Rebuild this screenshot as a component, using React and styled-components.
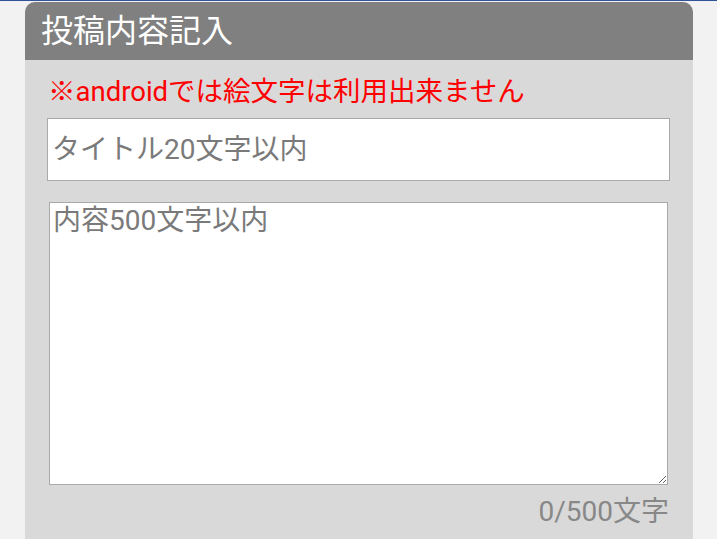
import React from "react";
import styled, { createGlobalStyle } from "styled-components";

const Global = createGlobalStyle`
  html, body { margin: 0; padding: 0; background: #f2f2f2; }
  body { font-family: "Roboto", "Noto Sans CJK JP", sans-serif; overflow: hidden; }
  * { box-sizing: border-box; }
`;

const Page = styled.div`
  height: 539px;
  display: flex;
  flex-direction: column;
  border-top: 1px solid #2f5597;
`;

const Card = styled.section`
  margin: 1px 0 0 25px;
  width: 668px;
  flex: 1;
  display: flex;
  flex-direction: column;
  background: #d9d9d9;
  border-radius: 10px 10px 0 0;
  overflow: hidden;
`;

const Header = styled.h2`
  margin: 0;
  height: 58px;
  padding-left: 16px;
  background: #808080;
  color: #ffffff;
  font-size: 32px;
  font-weight: 400;
  line-height: 58px;
`;

const Body = styled.div`
  display: flex;
  flex-direction: column;
  padding: 14px 0 0 22px;
`;

const Notice = styled.p`
  margin: 0 0 9px 0;
  padding-left: 1px;
  color: #ff0000;
  font-size: 27.5px;
  line-height: 35px;
`;

const placeholder = `
  &::placeholder { color: #7a7a7a; opacity: 1; }
`;

const TitleInput = styled.input`
  width: 623px;
  height: 63px;
  margin: 0;
  padding: 0 4px;
  border: 1px solid #a9a9a9;
  background: #ffffff;
  font-family: inherit;
  font-size: 28px;
  color: #333;
  outline: none;
  ${placeholder}
`;

const ContentArea = styled.textarea`
  display: block;
  width: 619px;
  height: 283px;
  margin: 21px 0 0 2px;
  padding: 2px 3px;
  border: 1px solid #a9a9a9;
  background: #ffffff;
  font-family: inherit;
  font-size: 28px;
  line-height: 32px;
  color: #333;
  outline: none;
  ${placeholder}
`;

const Counter = styled.div`
  width: 623px;
  margin-top: 9px;
  text-align: right;
  padding-right: 1px;
  color: #888888;
  font-size: 28px;
  line-height: 36px;
`;

export default function App() {
  return (
    <>
      <Global />
      <Page>
        <Card>
          <Header>投稿内容記入</Header>
          <Body>
            <Notice>※androidでは絵文字は利用出来ません</Notice>
            <TitleInput type="text" placeholder="タイトル20文字以内" />
            <ContentArea placeholder="内容500文字以内" />
            <Counter>0/500文字</Counter>
          </Body>
        </Card>
      </Page>
    </>
  );
}
